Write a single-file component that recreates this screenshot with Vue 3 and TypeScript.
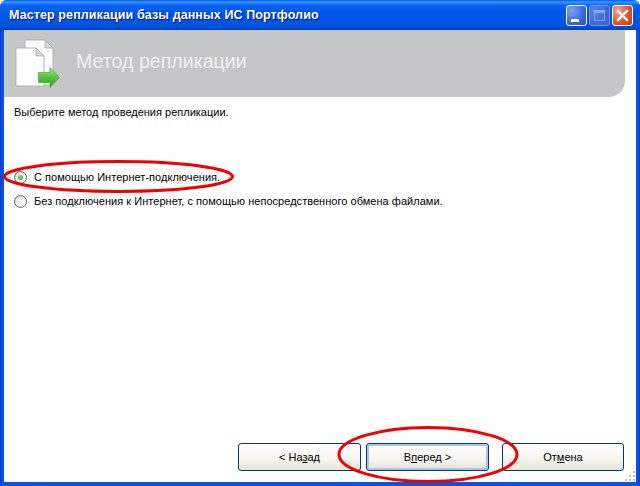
<script setup lang="ts">
const title = 'Мастер репликации базы данных ИС Портфолио'
const options = [
  { label: 'С помощью Интернет-подключения.', checked: true },
  { label: 'Без подключения к Интернет, с помощью непосредственного обмена файлами.', checked: false },
]
const grip = [[9,0],[5,4],[9,4],[1,8],[5,8],[9,8]]
</script>

<template>
  <div class="window">
    <header class="titlebar">
      <span class="title">{{ title }}</span>
      <div class="controls">
        <div class="ctl min"><i class="dash"></i></div>
        <div class="ctl max"><i class="box"></i></div>
        <div class="ctl close">
          <svg width="13" height="13" viewBox="0 0 13 13"><path d="M2 2 L11 11 M11 2 L2 11" stroke="#fff" stroke-width="2.4" stroke-linecap="square" fill="none"/></svg>
        </div>
      </div>
    </header>
    <main class="client">
      <section class="banner">
        <svg class="banner-icon" width="50" height="50" viewBox="0 0 50 50">
          <defs>
            <linearGradient id="arrowFill" x1="0" y1="0" x2="0" y2="1">
              <stop offset="0" stop-color="#a6e87a"/>
              <stop offset="0.5" stop-color="#52c43c"/>
              <stop offset="1" stop-color="#2f9e2a"/>
            </linearGradient>
          </defs>
          <path d="M11 1 H31 L39 9 V46 H11 Z" fill="#fbfbfb" stroke="#a9a9a9" stroke-width="0.8"/>
          <path d="M31 1 V9 H39 Z" fill="#d5d5d5" stroke="#a0a0a0" stroke-width="0.6"/>
          <path d="M2 9 H22 L30 17 V47 H2 Z" fill="#fdfdfd" stroke="#a5a5a5" stroke-width="0.8"/>
          <path d="M22 9 V17 H30 Z" fill="#d5d5d5" stroke="#a0a0a0" stroke-width="0.6"/>
          <path d="M24.5 33.5 H36 V28.5 L45.5 38.5 L36 48.5 V43.5 H24.5 Z" fill="url(#arrowFill)" stroke="#5aa848" stroke-width="0.8"/>
        </svg>
        <h1 class="heading">Метод репликации</h1>
      </section>
      <p class="prompt">Выберите метод проведения репликации.</p>
      <div class="options">
        <label v-for="o in options" :key="o.label" class="option">
          <span class="radio"><span v-if="o.checked" class="dot"></span></span>
          <span>{{ o.label }}</span>
        </label>
      </div>
      <footer class="actions">
        <button class="btn back">&lt; На<u>з</u>ад</button>
        <button class="btn next">В<u>п</u>еред &gt;</button>
        <button class="btn cancel">От<u>м</u>ена</button>
      </footer>
      <svg class="grip" width="12" height="11" viewBox="0 0 12 11">
        <rect v-for="(g, i) in grip" :key="i" :x="g[0]" :y="g[1]" width="2" height="2" fill="#c4c1b2"/>
      </svg>
    </main>
    <svg class="marks" width="640" height="486" viewBox="0 0 640 486">
      <ellipse cx="118.5" cy="176.5" rx="114" ry="15" fill="none" stroke="#f00000" stroke-width="3"/>
      <ellipse cx="428" cy="454.5" rx="89" ry="27" fill="none" stroke="#f00000" stroke-width="3"/>
    </svg>
  </div>
</template>

<style>
html, body { margin: 0; background: #fff; }
</style>

<style scoped>
.window {
  position: relative;
  width: 640px;
  height: 486px;
  display: flex;
  flex-direction: column;
  box-sizing: border-box;
  overflow: hidden;
  border-radius: 7px 7px 0 0;
  background: linear-gradient(90deg, #0831d9 0, #0855dd 2px, #0855dd 638px, #0831d9 640px);
  font-family: "Liberation Sans", Arial, sans-serif;
  font-size: 11px;
  color: #000;
}
.titlebar {
  height: 30px;
  flex: none;
  display: flex;
  align-items: center;
  justify-content: space-between;
  padding: 0 7px 0 9px;
  box-sizing: border-box;
  background: linear-gradient(180deg, #0058ee 0, #3d95ff 2px, #0a66f5 5px, #0058e6 12px, #0055e2 22px, #0053dd 26px, #0046c8 29px, #0040b8 30px);
}
.title {
  font-weight: 700;
  font-size: 12.5px;
  letter-spacing: 0.1px;
  color: #fff;
  text-shadow: 1px 1px 1px #0f1089;
}
.controls { display: flex; gap: 2px; }
.ctl {
  width: 21px;
  height: 21px;
  box-sizing: border-box;
  border: 1px solid #fff;
  border-radius: 3px;
  position: relative;
  display: flex;
  align-items: center;
  justify-content: center;
}
.min { background: radial-gradient(circle at 25% 25%, #7fa2f5, #3a66e0 60%, #2a4fc8); }
.max { background: radial-gradient(circle at 25% 25%, #5f84e8, #3f68d8 60%, #3a62d0); border-color: #6f93ea; }
.close { background: radial-gradient(circle at 25% 25%, #f0a58f, #e0552e 55%, #c93a14); }
.dash {
  position: absolute;
  left: 4px;
  bottom: 3px;
  width: 8px;
  height: 3px;
  background: #fff;
}
.box {
  width: 11px;
  height: 11px;
  box-sizing: border-box;
  border: 1px solid #86a5ef;
  border-top-width: 3px;
}
.client {
  flex: 1;
  position: relative;
  margin: 0 4px 4px;
  background: #fff;
  display: flex;
  flex-direction: column;
  min-height: 0;
}
.banner {
  height: 67px;
  flex: none;
  width: 621px;
  background: #c5c6c8;
  border-bottom-right-radius: 16px;
  display: flex;
  align-items: center;
  padding-left: 10px;
  box-sizing: border-box;
  gap: 12px;
}
.banner-icon { flex: none; }
.heading {
  margin: -5px 0 0;
  font-weight: 400;
  font-size: 19.6px;
  color: #f2f2f2;
}
.prompt { margin: 9px 0 0 10px; line-height: 13px; }
.options {
  margin: 51px 0 0 10px;
  display: flex;
  flex-direction: column;
  gap: 10px;
}
.option {
  display: flex;
  align-items: center;
  gap: 7px;
  height: 14px;
  letter-spacing: 0.03px;
}
.radio {
  width: 13px;
  height: 13px;
  box-sizing: border-box;
  border: 1px solid #4a6a80;
  border-radius: 50%;
  background: linear-gradient(135deg, #dcd9cf, #fff 80%);
  display: flex;
  align-items: center;
  justify-content: center;
  flex: none;
}
.dot {
  width: 5px;
  height: 5px;
  border-radius: 50%;
  background: radial-gradient(circle at 40% 40%, #7be07b, #21a121);
}
.actions {
  margin-top: auto;
  display: flex;
  padding: 0 12px 11px 234px;
}
.btn {
  height: 28px;
  padding: 0;
  box-sizing: border-box;
  border: 1px solid #003c74;
  border-radius: 3px;
  background: linear-gradient(180deg, #fff 0, #f5f4ee 60%, #e6e3d8 100%);
  font: inherit;
  color: #000;
}
.back { width: 123px; }
.next {
  width: 123px;
  margin-left: 5px;
  box-shadow: inset 0 0 0 2px #a9c4ee;
}
.cancel { width: 122px; margin-left: 13px; }
.grip { position: absolute; right: 0; bottom: 0; }
.marks { position: absolute; left: 0; top: 0; pointer-events: none; }
</style>
